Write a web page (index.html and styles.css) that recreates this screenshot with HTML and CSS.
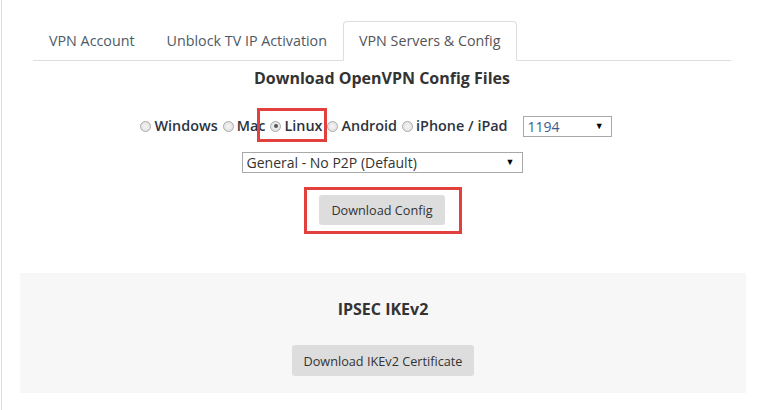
FILE: index.html
```html
<!DOCTYPE html>
<html>
<head>
<meta charset="utf-8">
<link rel="stylesheet" href="styles.css">
</head>
<body>
<div class="page">
  <ul class="tabs">
    <li class="tab">VPN Account</li>
    <li class="tab">Unblock TV IP Activation</li>
    <li class="tab active">VPN Servers &amp; Config</li>
  </ul>

  <section class="openvpn">
    <h3 class="title">Download OpenVPN Config Files</h3>
    <div class="os-row">
      <label class="os"><input type="radio" name="os">Windows</label>
      <label class="os"><input type="radio" name="os">Mac</label>
      <label class="os mark"><input type="radio" name="os" checked>Linux<span class="red-box"></span></label>
      <label class="os"><input type="radio" name="os">Android</label>
      <label class="os"><input type="radio" name="os">iPhone / iPad</label>
      <div class="select-wrap port">
        <select class="select"><option>1194</option></select>
      </div>
    </div>
    <div class="select-wrap server">
      <select class="select"><option>General - No P2P (Default)</option></select>
    </div>
    <div class="btn-row">
      <button class="btn mark">Download Config<span class="red-box"></span></button>
    </div>
  </section>

  <section class="ipsec">
    <h3 class="title small">IPSEC IKEv2</h3>
    <button class="btn cert">Download IKEv2 Certificate</button>
  </section>
</div>
</body>
</html>
```

FILE: styles.css
```css
* { box-sizing: border-box; }
html, body { margin: 0; padding: 0; background: #fff; }
body { font-family: "Open Sans", "Liberation Sans", sans-serif; color: #333; }

.page {
  margin-left: 1px;
  border-left: 1px solid #ddd;
  min-height: 410px;
  padding-top: 21px;
}

.tabs {
  list-style: none;
  margin: 0 32px 0 31px;
  padding: 0;
  display: flex;
  border-bottom: 1px solid #ddd;
}
.tab {
  font-size: 14.3px;
  line-height: 20px;
  padding: 9px 15px 9px 15px;
  border: 1px solid transparent;
  border-radius: 4px 4px 0 0;
  margin-bottom: -1px;
  color: #4d5a66;
}
.tab.active {
  border-color: #ddd;
  border-bottom-color: #fff;
  background: #fff;
  color: #555;
}

.openvpn {
  display: flex;
  flex-direction: column;
  align-items: center;
  padding-left: 31px;
  padding-right: 32px;
}
.title {
  margin: 7px 0 0;
  font-size: 16px;
  line-height: 20px;
  font-weight: 700;
  color: #333;
}
.os-row {
  display: flex;
  align-items: center;
  margin-top: 27px;
  height: 22px;
  padding-right: 12px;
}
.os {
  position: relative;
  display: flex;
  align-items: center;
  font-size: 14.4px;
  font-weight: 600;
  line-height: 20px;
  color: #2b3440;
  margin-right: 5px;
}
.os input {
  appearance: none;
  -webkit-appearance: none;
  width: 11px;
  height: 11px;
  margin: 0 3px 0 0;
  border: 1px solid #aaa;
  border-radius: 50%;
  background: radial-gradient(circle, #f4f4f4 0%, #ddd 100%);
  position: relative;
}
.os input:checked::after {
  content: "";
  position: absolute;
  left: 2.5px;
  top: 2.5px;
  width: 4px;
  height: 4px;
  border-radius: 50%;
  background: #555;
}
.red-box {
  position: absolute;
  border: 3px solid #e2403c;
  pointer-events: none;
}
.os .red-box { left: -13px; right: -5px; top: -8px; bottom: -6px; }

.select-wrap {
  position: relative;
}
.select-wrap::after {
  content: "\25BC";
  position: absolute;
  right: 8px;
  top: 4px;
  font-size: 9px;
  line-height: 12px;
  color: #000;
  pointer-events: none;
}
.select {
  appearance: none;
  -webkit-appearance: none;
  display: block;
  width: 100%;
  height: 21px;
  border: 1px solid #a9a9a9;
  border-radius: 0;
  background: #fff;
  font-family: "Open Sans", "Liberation Sans", sans-serif;
  font-size: 14px;
  line-height: 19px;
  padding: 0 4px;
  color: #333;
}
.port { width: 89px; margin-left: 10px; }
.port .select { color: #3a5b8c; }
.server { width: 281px; margin-top: 15px; }

.btn-row { margin-top: 22px; }
.btn {
  position: relative;
  border: 0;
  border-radius: 3px;
  background: #ddd;
  font-family: "Open Sans", "Liberation Sans", sans-serif;
  font-size: 12.7px;
  line-height: 18px;
  color: #333;
  padding: 6px 12px;
  height: 30px;
}
.btn .red-box { left: -15px; right: -17px; top: -8px; bottom: -9px; }

.ipsec {
  margin: 48px 17px 0 18px;
  background: #f7f7f7;
  display: flex;
  flex-direction: column;
  align-items: center;
  padding: 26px 0 17px;
}
.title.small { margin: 0; font-size: 16px; }
.cert { margin-top: 26px; height: 31px; }
```
